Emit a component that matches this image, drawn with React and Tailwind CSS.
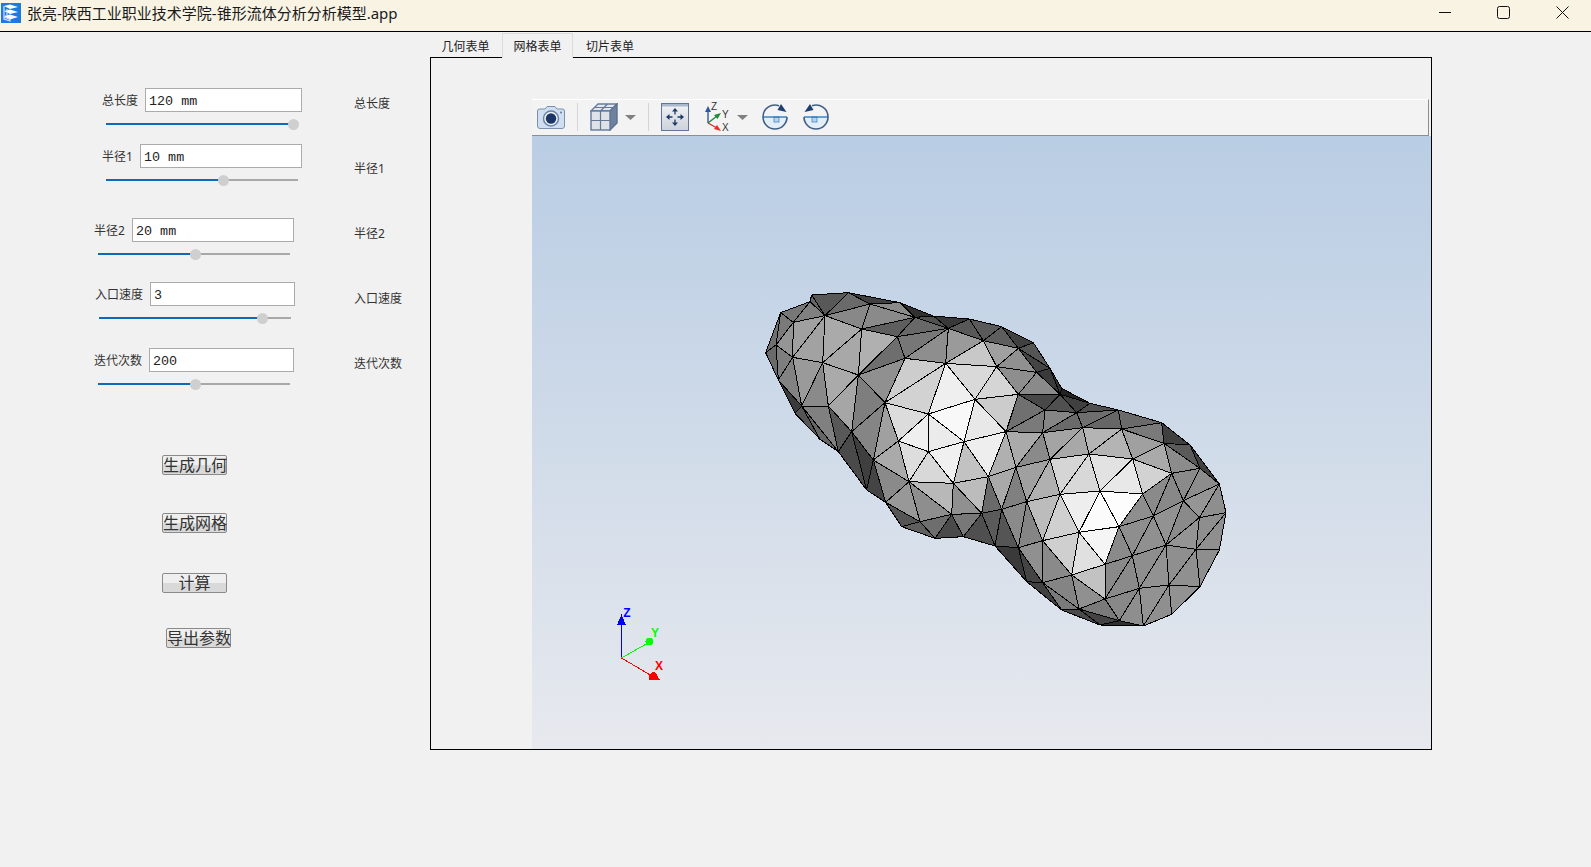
const V = {
  A:[47,218],B:[92,98],C:[185,45],D:[295,38],E:[450,68],F:[550,108],G:[658,117],H:[755,140],I:[850,188],J:[900,265],K:[935,325],k2:[930,343],L:[1020,370],M:[1105,390],N:[1235,428],O:[1320,495],P:[1408,612],Q:[1428,698],R:[1408,810],S:[1350,920],T:[1265,1003],U:[1180,1038],Vv:[1050,1035],W:[935,990],X:[830,905],Z:[735,798],AA:[640,770],AB:[555,775],AC:[455,740],AD:[407,667],AE:[350,630],AF:[265,515],AG:[210,478],AH:[135,400],AI:[85,300],
  v1:[130,127],v2:[180,65],v3:[225,107],v4:[360,72],v5:[335,147],v6:[495,112],v7:[442,170],v8:[595,145],v9:[700,182],v10:[805,205],
  w1:[78,195],w2:[128,232],w3:[218,248],w4:[325,285],w5:[465,235],w6:[587,250],w7:[740,260],w8:[860,277],
  x2:[155,378],x3:[235,378],x4:[305,455],x5:[405,368],x6:[535,402],x7:[675,358],x8:[805,343],x9:[885,390],
  y1:[370,540],y2:[445,483],y3:[535,515],y4:[642,485],y5:[477,605],y6:[610,610],y7:[715,590],y8:[510,725],y9:[605,703],y10:[695,700],
  z1:[768,455],z2:[878,458],z3:[980,398],z4:[998,443],z5:[1115,447],z6:[1242,490],z7:[1350,565],
  u1:[798,562],u2:[900,538],u3:[1017,522],u4:[1148,537],u5:[1265,580],
  t1:[830,665],t2:[930,643],t3:[1050,633],t4:[1178,642],t5:[1300,662],
  s1:[755,688],s3:[805,803],s4:[878,782],s5:[987,757],s6:[1107,740],s7:[1210,708],s8:[1348,713],
  r2:[1248,795],r3:[1338,808],r4:[1147,827],r5:[1065,853],r6:[965,885],r7:[878,908],r8:[1065,957],r9:[1168,925],r10:[1257,915],r11:[987,987],r12:[1108,1022],
};

const FACES = `A B w1 707070;B v1 w1 7a7a7a;B v2 v1 777777;v2 v3 v1 808080;C v3 v2 666666;C D v3 585858;D v4 v3 6a6a6a;D E v4 404040;v3 v4 v5 888888;v4 E v6 8a8a8a;E F v6 303030;v4 v6 v5 8a8a8a;v5 v6 v7 5e5e5e;v6 F v8 505050;F G v8 383838;v6 v8 v7 686868;G v9 v8 585858;G H v9 5a5a5a;v8 v9 w6 9a9a9a;v7 v8 w5 777777;w5 v8 w6 8e8e8e;w1 v1 w2 959595;v1 v3 w2 a0a0a0;v3 w3 w2 a2a2a2;v3 v5 w3 aaaaaa;v5 w4 w3 a8a8a8;v5 v7 w4 b0b0b0;v7 w5 w4 6e6e6e;w1 w2 AI 7e7e7e;A w1 AI 6a6a6a;AI w2 x2 828282;w2 w3 x2 9a9a9a;w3 x3 x2 8a8a8a;w3 w4 x3 aaaaaa;x3 w4 x4 a6a6a6;w4 x5 x4 7e7e7e;w4 w5 x5 909090;w5 w6 x5 cdcdcd;w6 x6 x5 d2d2d2;w6 x7 x6 efefef;w6 v9 w7 c8c8c8;w6 w7 x7 d9d9d9;AI x2 AH 3a3a3a;x2 AH AG 555555;x2 x3 AF 808080;x2 AF AG 666666;x3 x4 AF 585858;x4 AF AE 4a4a4a;x4 y1 AE 3f3f3f;x4 x5 y1 858585;x5 y2 y1 a0a0a0;x5 x6 y2 dcdcdc;x6 y3 y2 efefef;x6 x7 y4 f8f8f8;x6 y4 y3 ebebeb;x7 w7 x8 d5d5d5;x7 x8 z1 cccccc;x7 z1 y4 e8e8e8;y4 z1 y7 eeeeee;y3 y4 y6 f0f0f0;y3 y6 y5 d8d8d8;y2 y3 y5 dddddd;y1 y2 y5 aaaaaa;y4 y7 y6 c2c2c2;y1 y5 AD 8a8a8a;y1 AE AD 444444;AD y5 y8 989898;y5 y6 y9 b8b8b8;y5 y9 y8 8e8e8e;y6 y7 y10 bcbcbc;y6 y10 y9 909090;AD y8 AC 555555;AC y8 AB 5f5f5f;y8 y9 AB 6e6e6e;y9 AA AB 4a4a4a;y9 y10 AA 787878;y10 AA Z 4f4f4f;y10 Z s1 5a5a5a;y7 y10 s1 6a6a6a;y7 u1 s1 a9a9a9;z1 u1 y7 b0b0b0;u1 t1 s1 808080;s1 t1 s3 8a8a8a;t1 s4 s3 858585;s3 s4 r7 909090;s3 r7 X 444444;s1 s3 Z 555555;Z s3 X 3a3a3a;z1 z2 u1 aaaaaa;z2 u2 u1 8a8a8a;u1 u2 t1 a0a0a0;u2 t2 t1 b0b0b0;z2 z4 u2 a4a4a4;z4 u3 u2 a8a8a8;z4 z5 u3 b4b4b4;u3 z5 u4 b4b4b4;z5 z6 u4 a0a0a0;z6 u5 u4 aaaaaa;z6 z7 u5 8c8c8c;u2 u3 t2 d5d5d5;u3 t3 t2 d8d8d8;u3 u4 t3 e2e2e2;u4 t4 t3 e8e8e8;u4 u5 t4 d2d2d2;t2 t3 s5 eeeeee;t3 s6 s5 fbfbfb;t3 t4 s6 fdfdfd;t4 u5 s7 8a8a8a;t4 s7 s6 8e8e8e;u5 t5 s7 888888;u5 z7 t5 8a8a8a;z7 P t5 8c8c8c;O P z7 404040;z6 O z7 5a5a5a;N O z6 404040;t1 t2 s4 bcbcbc;t2 s5 s4 d0d0d0;s4 s5 r6 cfcfcf;s5 r5 r6 e0e0e0;s5 s6 r5 f5f5f5;s6 r4 r5 8a8a8a;s6 s7 r4 8e8e8e;s7 r2 r4 909090;s7 t5 r2 929292;t5 s8 r2 8a8a8a;t5 P s8 959595;P Q s8 8e8e8e;s8 Q r3 8e8e8e;Q R r3 8f8f8f;s8 r3 r2 949494;r2 r3 r10 8f8f8f;r3 S r10 909090;r3 R S 8e8e8e;r2 r10 r9 929292;r4 r2 r9 8e8e8e;r4 r9 r8 8a8a8a;r5 r4 r8 898989;r5 r8 r6 c2c2c2;r6 r8 r11 909090;s4 r6 r7 8a8a8a;r7 r6 r11 848484;X r7 W 404040;r7 r11 W 7a7a7a;W r11 Vv 4a4a4a;r11 r12 Vv 444444;r11 r8 r12 7a7a7a;r8 r9 r12 888888;r12 r9 U 8e8e8e;r12 U Vv 303030;r9 r10 U 929292;r10 T U 8f8f8f;r10 S T 929292;z1 x8 x9 707070;z1 x9 z2 7a7a7a;x9 z3 z2 858585;z3 z4 z2 6a6a6a;z3 M z4 6e6e6e;M z5 z4 666666;M N z5 6a6a6a;z5 N z6 7a7a7a;z3 L M 505050;k2 L z3 404040;k2 z3 x9 505050;K L k2 222222;v9 v10 w7 a0a0a0;v10 w8 w7 909090;w7 w8 x8 8e8e8e;H v10 v9 5e5e5e;H I v10 404040;I J v10 555555;v10 J w8 444444;w8 J k2 3a3a3a;J K k2 303030;w8 k2 x8 8a8a8a;x8 k2 x9 484848`
  .split(";").map((s) => s.split(" "));

function Mesh() {
  return (
    <svg className="absolute left-[218px] top-[144px]" width="490" height="360" viewBox="0 0 1470 1080" shapeRendering="crispEdges">
      {FACES.map(([a, b, c, col], i) => (
        <polygon key={i} points={`${V[a]} ${V[b]} ${V[c]}`} fill={`#${col}`} stroke="#000" strokeWidth="3" strokeLinejoin="round" />
      ))}
    </svg>
  );
}

function Triad() {
  return (
    <svg className="absolute left-[68px] top-[464px]" width="70" height="90" viewBox="0 0 70 90">
      <g shapeRendering="crispEdges">
        <line x1="21.5" y1="58" x2="21.5" y2="22" stroke="#0000ff" strokeWidth="1" />
        <line x1="21.5" y1="58" x2="48" y2="43" stroke="#00ff00" strokeWidth="1" />
        <line x1="21.5" y1="58" x2="52" y2="76" stroke="#ff0000" strokeWidth="1" />
        <polygon points="21.5,14 23,18 26,25 17,25 20,18" fill="#0000ff" />
        <circle cx="49.5" cy="41.5" r="4" fill="#00ff00" />
        <polygon points="60,80 49,80 49,75 52,72 55,72" fill="#ff0000" />
      </g>
      <g fontFamily="'Liberation Sans',sans-serif" fontWeight="700" fontSize="12" textAnchor="middle">
        <text x="27" y="17" fill="#0000ff">Z</text>
        <text x="55" y="37" fill="#00ff00">Y</text>
        <text x="59" y="70" fill="#ff0000">X</text>
      </g>
    </svg>
  );
}

const Sep = ({ cls }) => <div className={`h-[28px] w-[1px] bg-[#d4d4d4] ${cls}`} />;

const Caret = ({ cls }) => (
  <svg className={cls} width="11" height="5" viewBox="0 0 11 5"><polygon points="0,0 11,0 5.5,5" fill="#808080" /></svg>
);

const Camera = () => (
  <svg className="ml-[5px]" width="28" height="24" viewBox="0 0 28 24">
    <path d="M8 4 L10 1.5 H18 L20 4 H25.5 Q27.5 4 27.5 6 V21 Q27.5 23.5 25 23.5 H3 Q0.5 23.5 0.5 21 V6 Q0.5 4 2.5 4 Z" fill="#cfdef0" stroke="#7b90ad" />
    <circle cx="14" cy="13.5" r="7.5" fill="#eef3f9" stroke="#6b84a8" strokeWidth="1.5" />
    <circle cx="14" cy="13.5" r="5.2" fill="#1b3567" />
    <circle cx="24" cy="7.5" r="1" fill="#5f7ea5" />
  </svg>
);

const Cube = () => (
  <svg className="ml-[12px]" width="28" height="28" viewBox="0 0 28 28">
    <path d="M1 8 L8 1 H27 L20 8 Z" fill="#e4e7ea" stroke="#6a7d9a" strokeWidth="1.4" />
    <path d="M20 8 L27 1 V20 L20 27 Z" fill="#6f819e" stroke="#5b6f8e" strokeWidth="1.4" />
    <rect x="1" y="8" width="19" height="19" fill="#dfe2e6" stroke="#64789a" strokeWidth="1.4" />
    <path d="M10.5 8 V27 M1 17.5 H20 M10.5 8 L17.5 1 M5 4.5 H24" stroke="#64789a" strokeWidth="1.2" fill="none" />
  </svg>
);

const Fit = () => (
  <svg className="ml-[12px]" width="28" height="28" viewBox="0 0 28 28">
    <defs>
      <linearGradient id="fitg" x1="0" y1="0" x2="0" y2="1"><stop offset="0" stopColor="#f2f4f6" /><stop offset="1" stopColor="#cdd2da" /></linearGradient>
    </defs>
    <rect x="0.5" y="0.5" width="27" height="27" fill="url(#fitg)" stroke="#61779a" />
    <rect x="1" y="1" width="26" height="2.5" fill="#a9b8cd" />
    <path d="M14 8 V11.5 M14 16.5 V20 M8 14 H11.5 M16.5 14 H20" stroke="#1d3b66" strokeWidth="1.3" fill="none" />
    <g fill="#1d3b66">
      <polygon points="14,5 11,8.5 17,8.5" />
      <polygon points="14,23 11,19.5 17,19.5" />
      <polygon points="5,14 8.5,11 8.5,17" />
      <polygon points="23,14 19.5,11 19.5,17" />
    </g>
  </svg>
);

const Axes = () => (
  <svg className="ml-[16px]" width="27" height="30" viewBox="0 0 27 30">
    <line x1="3" y1="21" x2="3" y2="8" stroke="#2c5aa0" strokeWidth="1.4" />
    <polygon points="3,4 0,10 6,10" fill="#2c5aa0" />
    <line x1="3" y1="21" x2="12" y2="14" stroke="#1d8a3c" strokeWidth="1.4" />
    <polygon points="16,11 9,13 12.5,17" fill="#1d8a3c" />
    <line x1="3" y1="21" x2="12" y2="26" stroke="#d0342c" strokeWidth="1.4" />
    <polygon points="16,29 9,27 12,23" fill="#e53028" />
    <g fontFamily="'Liberation Sans',sans-serif" fontSize="10" fill="#333">
      <text x="6" y="8">Z</text>
      <text x="17" y="16">Y</text>
      <text x="17" y="29">X</text>
    </g>
  </svg>
);

const Rotate = ({ flip, cls }) => (
  <svg className={cls} width="26" height="26" viewBox="0 0 26 26" style={flip ? { transform: "scaleX(-1)" } : undefined}>
    <path d="M1 13 H25 A12 12 0 0 1 1 13 Z" fill="#e3eff8" />
    <rect x="12" y="13" width="5" height="5" fill="#b5d4ee" stroke="#4a86c0" strokeWidth="0.8" />
    <line x1="1" y1="13" x2="25" y2="13" stroke="#1c75bc" strokeWidth="1.3" />
    <path d="M1 13 A12 12 0 0 1 17 1.7 M25 13 A12 12 0 0 1 1 13" fill="none" stroke="#3f5f86" strokeWidth="1.6" />
    <polygon points="15.5,6 19,0 24.5,8" fill="#1f3f6e" />
  </svg>
);

const Logo = () => (
  <svg width="20" height="20" viewBox="0 0 20 20">
    <rect width="20" height="20" fill="#1f7ae0" />
    <path d="M3 3 L9 1.5 L17 4 L9 6 Z M3 8 L9 6.5 L17 9 L9 11 Z M3 13 L9 11.5 L17 14 L9 16.5 Z" fill="#ffffff" />
    <path d="M3 3 V16 L9 18 V16.5 L3 14 M6 6 V13" stroke="#cfe4fb" strokeWidth="1.2" fill="none" />
  </svg>
);

function Slider({ pct }) {
  return (
    <div className="mt-[6px] flex h-[12px] w-[192px] items-center">
      <div className="h-[2px] bg-[#0f69bb]" style={{ width: `${pct}%` }} />
      <div className="relative z-10 -mx-[5px] h-[11px] w-[11px] shrink-0 rounded-full bg-[#cfcfcf]" />
      <div className="h-[2px] flex-1 bg-[#a8a8a8]" />
    </div>
  );
}

const inputCls = "h-[24px] border border-[#ababab] bg-white px-[3px] pt-[2px] text-[13.4px] text-[#222] outline-none font-['Liberation_Mono',monospace]";
const labelCls = "mt-[2px] text-[12px] leading-[20px] text-[#333] whitespace-nowrap";
const sideCls = "h-[20px] text-[12px] leading-[20px] text-[#333] whitespace-nowrap";
const btnCls = "h-[20px] w-[65px] rounded-[2px] border border-[#8a8a8a] bg-[linear-gradient(#efefef_50%,#d9d9d9_50%)] text-[16px] leading-[18px] text-[#333] whitespace-nowrap";

export default function App() {
  return (
    <div className="h-[867px] w-[1591px] overflow-hidden bg-[#f1f1f1] font-['Noto_Sans','Noto_Sans_CJK_SC',sans-serif]">
      <div className="flex h-[32px] items-center border-b border-black bg-[#f8f3e3] pb-[7px] pl-[1px] pt-[1px]">
        <Logo />
        <span className="ml-[6px] text-[15px] leading-[20px] text-[#1a1a1a] whitespace-nowrap">张亮-陕西工业职业技术学院-锥形流体分析分析模型.app</span>
        <div className="ml-auto flex items-center pr-[22px]">
          <svg width="13" height="13" viewBox="0 0 13 13"><line x1="0" y1="6.5" x2="12" y2="6.5" stroke="#111" /></svg>
          <svg className="ml-[45px]" width="13" height="13" viewBox="0 0 13 13"><rect x="0.5" y="0.5" width="12" height="12" rx="2" fill="none" stroke="#111" /></svg>
          <svg className="ml-[46px]" width="13" height="13" viewBox="0 0 13 13"><path d="M0.5 0.5 L12.5 12.5 M12.5 0.5 L0.5 12.5" stroke="#111" fill="none" /></svg>
        </div>
      </div>

      <div className="flex">
        <div className="w-[430px] shrink-0">
          <div className="flex">
            <div className="w-[354px] shrink-0 pt-[56px]">
              <div className="pl-[102px]">
                <div className="flex items-center">
                  <span className={`${labelCls} w-[43px]`}>总长度</span>
                  <input readOnly value="120 mm" className={`${inputCls} w-[157px]`} />
                </div>
                <div className="ml-[4px]"><Slider pct={97.5} /></div>
              </div>
              <div className="mt-[14px] pl-[102px]">
                <div className="flex items-center">
                  <span className={`${labelCls} w-[38px]`}>半径1</span>
                  <input readOnly value="10 mm" className={`${inputCls} w-[162px]`} />
                </div>
                <div className="ml-[4px]"><Slider pct={61} /></div>
              </div>
              <div className="mt-[32px] pl-[94px]">
                <div className="flex items-center">
                  <span className={`${labelCls} w-[38px]`}>半径2</span>
                  <input readOnly value="20 mm" className={`${inputCls} w-[162px]`} />
                </div>
                <div className="ml-[4px]"><Slider pct={50.5} /></div>
              </div>
              <div className="mt-[22px] pl-[95px]">
                <div className="flex items-center">
                  <span className={`${labelCls} w-[55px]`}>入口速度</span>
                  <input readOnly value="3" className={`${inputCls} w-[145px]`} />
                </div>
                <div className="ml-[4px]"><Slider pct={85} /></div>
              </div>
              <div className="mt-[24px] pl-[94px]">
                <div className="flex items-center">
                  <span className={`${labelCls} w-[55px]`}>迭代次数</span>
                  <input readOnly value="200" className={`${inputCls} w-[145px]`} />
                </div>
                <div className="ml-[4px]"><Slider pct={50.5} /></div>
              </div>
            </div>
            <div className="flex flex-col gap-[45px] pt-[62px]">
              <div className={sideCls}>总长度</div>
              <div className={sideCls}>半径1</div>
              <div className={sideCls}>半径2</div>
              <div className={sideCls}>入口速度</div>
              <div className={sideCls}>迭代次数</div>
            </div>
          </div>
          <div className="flex flex-col items-start pl-[162px] pt-[65px]">
            <button className={btnCls}>生成几何</button>
            <button className={`${btnCls} mt-[38px]`}>生成网格</button>
            <button className={`${btnCls} mt-[40px]`}>计算</button>
            <button className={`${btnCls} ml-[4px] mt-[35px]`}>导出参数</button>
          </div>
        </div>

        <div className="w-[1002px] shrink-0">
          <div className="flex h-[25px] pl-[1px] pt-[1px] text-[12px] text-[#222]">
            <div className="flex w-[71px] items-center justify-center pr-[2px] pt-[3px]">几何表单</div>
            <div className="relative z-10 flex h-[25px] w-[71px] items-center justify-center border border-b-0 border-[#dcdcdc] bg-[#f1f1f1] pt-[2px]">网格表单</div>
            <div className="flex w-[74px] items-center justify-center pt-[3px]">切片表单</div>
          </div>
          <div className="h-[693px] border border-black pl-[101px] pt-[41px]">
            <div className="flex h-full flex-col">
              <div className="mr-[2px] flex h-[37px] shrink-0 items-center border-y border-r border-t-white border-b-[#8e8e8e] border-r-[#8e8e8e] bg-[#f3f3f3] pb-[1px]">
                <Camera />
                <Sep cls="ml-[12px]" />
                <Cube />
                <Caret cls="ml-[7px]" />
                <Sep cls="ml-[12px]" />
                <Fit />
                <Axes />
                <Caret cls="ml-[5px]" />
                <Rotate cls="ml-[14px]" />
                <Rotate flip cls="ml-[15px]" />
              </div>
              <div className="relative flex-1 bg-[linear-gradient(#b9cde4,#e7e9ee)]">
                <Mesh />
                <Triad />
              </div>
            </div>
          </div>
        </div>
      </div>
    </div>
  );
}
